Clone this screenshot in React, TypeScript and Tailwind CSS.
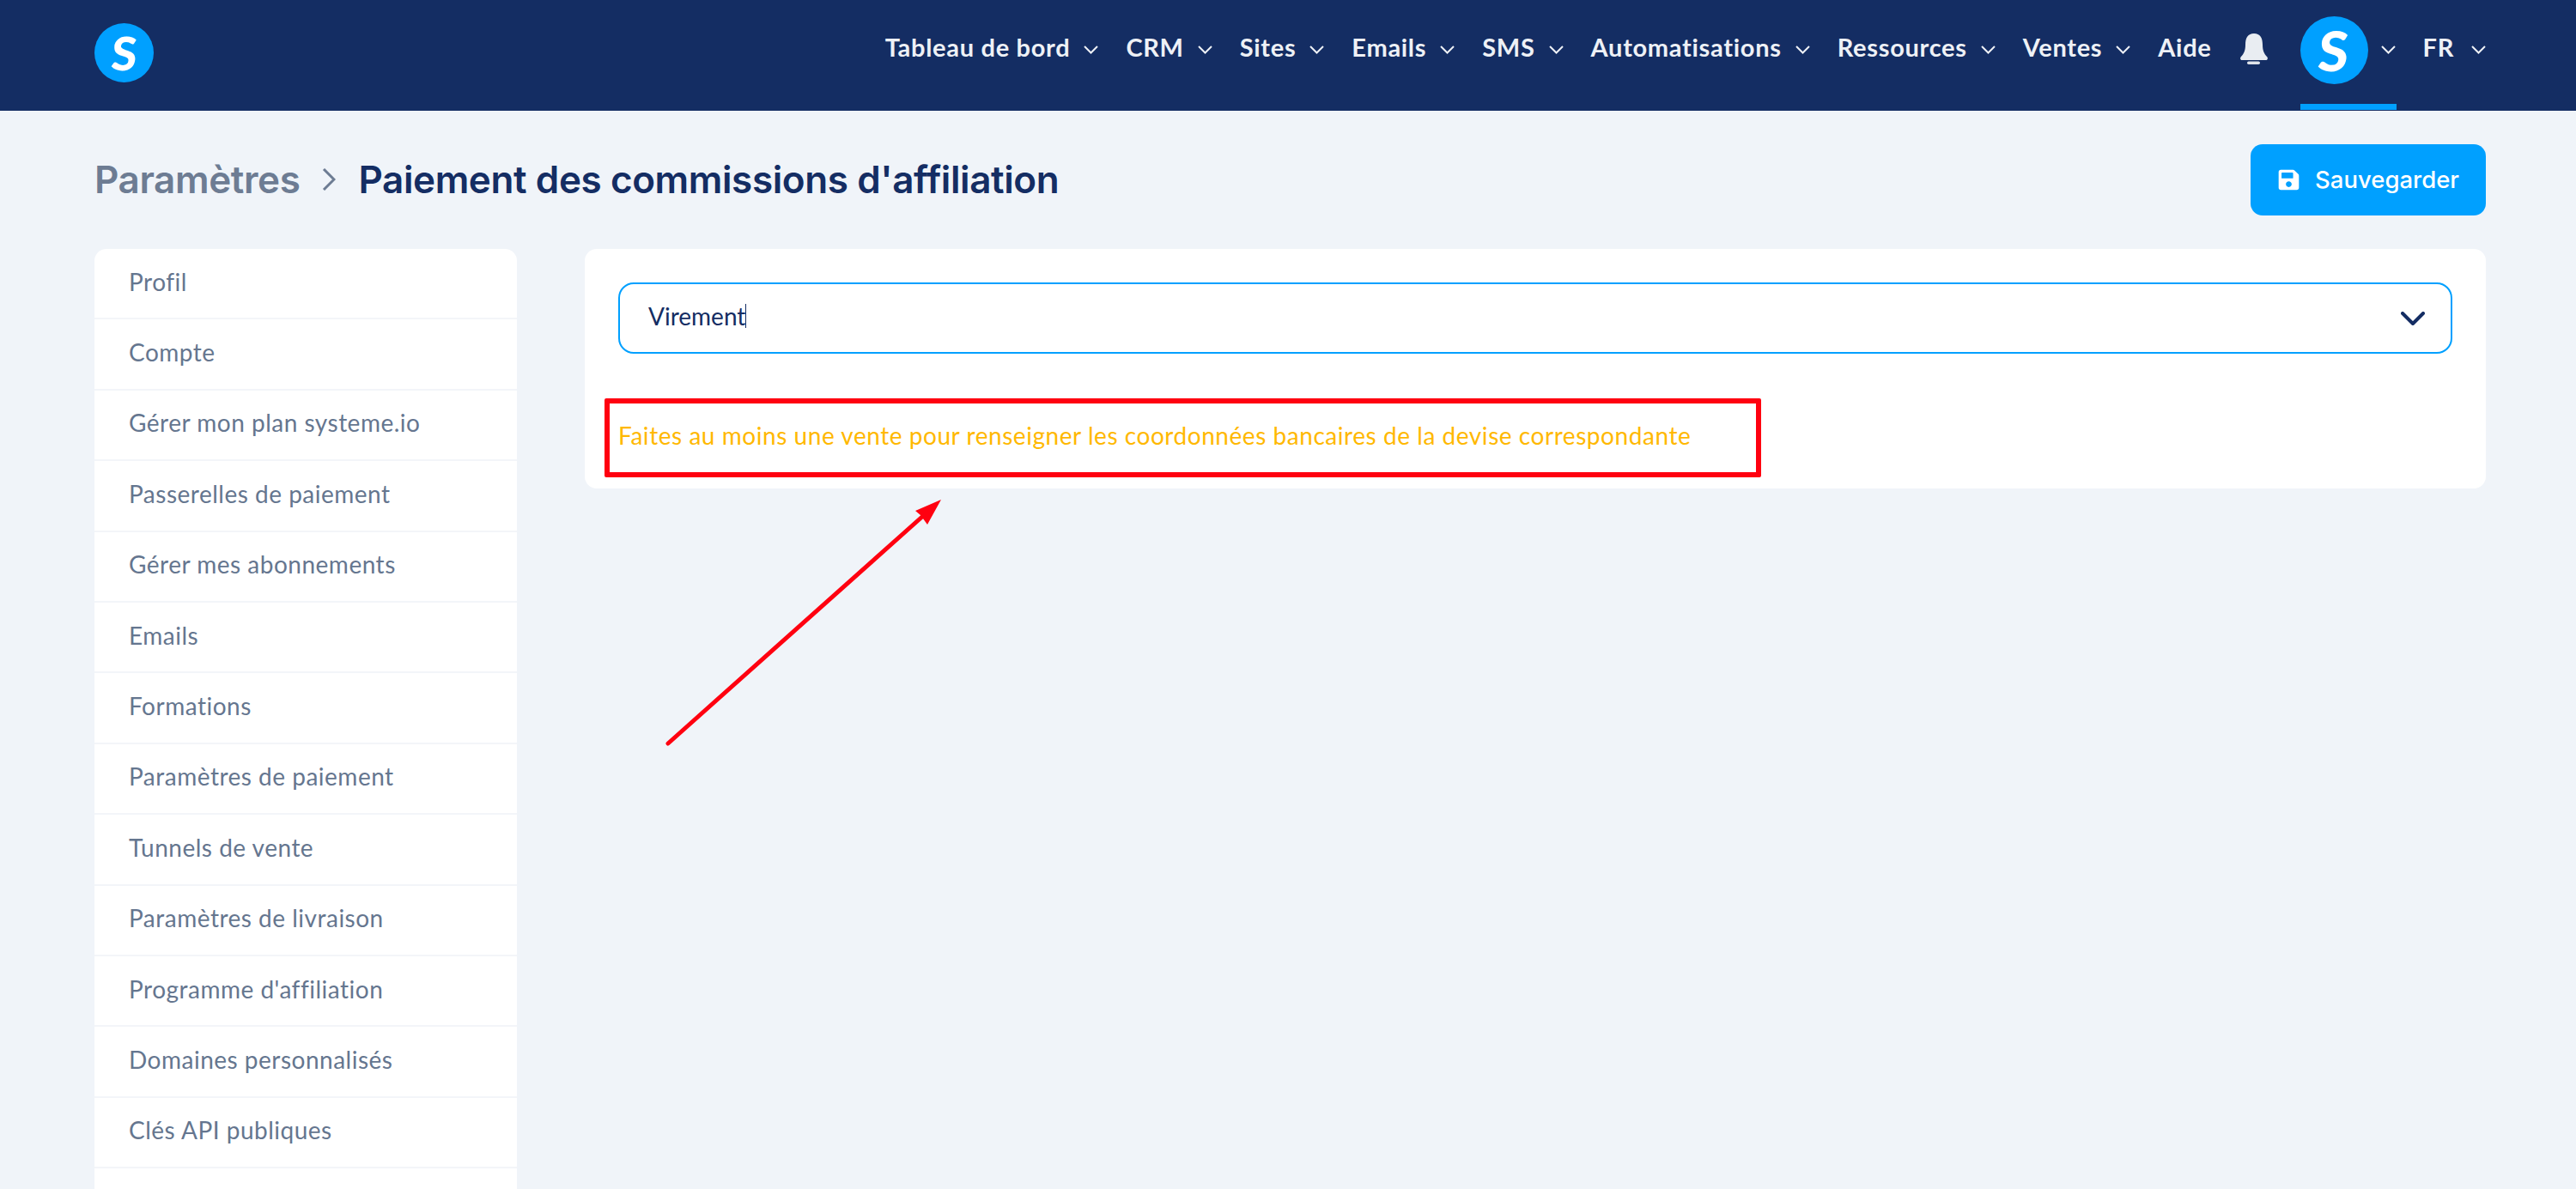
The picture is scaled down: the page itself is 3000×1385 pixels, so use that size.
import { FaSave } from "react-icons/fa";

const navItems = [
  { label: "Tableau de bord", hasMenu: true },
  { label: "CRM", hasMenu: true },
  { label: "Sites", hasMenu: true },
  { label: "Emails", hasMenu: true },
  { label: "SMS", hasMenu: true },
  { label: "Automatisations", hasMenu: true },
  { label: "Ressources", hasMenu: true },
  { label: "Ventes", hasMenu: true },
  { label: "Aide", hasMenu: false },
];

const sideItems = [
  "Profil",
  "Compte",
  "Gérer mon plan systeme.io",
  "Passerelles de paiement",
  "Gérer mes abonnements",
  "Emails",
  "Formations",
  "Paramètres de paiement",
  "Tunnels de vente",
  "Paramètres de livraison",
  "Programme d'affiliation",
  "Domaines personnalisés",
  "Clés API publiques",
];

function NavChevron() {
  return (
    <svg viewBox="0 0 17 10" className="w-[17px] h-[10px] mt-[5px] shrink-0" fill="none">
      <path d="M1 1L8.500 8.500L16 1" stroke="#eef1f6" strokeWidth="2" />
    </svg>
  );
}

function Header() {
  return (
    <header className="h-[129px] bg-[#142d63] flex justify-between items-start pl-[110px] pr-[105px]">
      <div className="pt-[27px]">
        <div className="w-[69px] h-[69px] rounded-full bg-[#00a0ff] flex items-center justify-center text-white text-[54px] font-black font-['Lato',sans-serif]">
          <span className="-skew-x-[5deg]">S</span>
        </div>
      </div>
      <nav className="flex items-center h-[108px] pt-[2px] text-[29px] font-bold text-[#eef1f6] font-['Lato',sans-serif] tracking-[0.7px]">
        <div className="flex items-center gap-[32px]">
          {navItems.map((item) => (
            <div key={item.label} className="flex items-center gap-[16px]">
              <span>{item.label}</span>
              {item.hasMenu && <NavChevron />}
            </div>
          ))}
        </div>
        <svg viewBox="0 0 34 36" className="w-[34px] h-[36px] ml-[32px] mt-[3px]" fill="#e9edf2">
          <path d="M17 0C24 0 27 5 27 13C27 20 29 24 32 27C33.500 28.500 33 31 31 31H3C1 31 .5 28.500 2 27C5 24 7 20 7 13C7 5 10 0 17 0Z" />
          <rect x="9" y="32.500" width="15" height="3.500" rx="1.700" fill="#dfe3ea" />
        </svg>
        <div className="relative flex items-center ml-[37px] gap-[15px] h-[108px]">
          <div className="w-[79px] h-[79px] mt-[7px] rounded-full bg-[#00a0ff] flex items-center justify-center text-white text-[64px] font-black">
            <span className="-skew-x-[5deg]">S</span>
          </div>
          <NavChevron />
          <div className="absolute left-0 top-[120px] w-[112px] h-[7px] bg-[#00a0ff]" />
        </div>
        <div className="flex items-center gap-[20px] ml-[32px]">
          <span>FR</span>
          <NavChevron />
        </div>
      </nav>
    </header>
  );
}

export default function App() {
  return (
    <div className="relative h-[1385px] overflow-hidden bg-[#f0f4f9] font-['Lato',sans-serif]">
      <Header />

      <div className="flex items-center justify-between pl-[110px] pr-[105px] h-[161px]">
        <div className="flex items-center pb-[2px] font-['Inter',sans-serif] text-[44px] font-semibold tracking-[-0.4px]">
          <span className="text-[#6d7c93]">Paramètres</span>
          <svg viewBox="0 0 16 26" className="w-[16px] h-[26px] mx-[26px]" fill="none">
            <path d="M2 1L14 13L2 25" stroke="#6d7c93" strokeWidth="3" />
          </svg>
          <span className="text-[#142d63]">Paiement des commissions d'affiliation</span>
        </div>
        <button className="w-[274px] h-[83px] rounded-[14px] bg-[#00a0ff] text-white flex items-center justify-center gap-[17px] text-[27.500px] font-medium font-['Inter',sans-serif]">
          <FaSave className="w-[27px] h-[27px]" />
          Sauvegarder
        </button>
      </div>

      <div className="flex items-start gap-[79px] pl-[110px] pr-[105px]">
        <aside className="w-[492px] shrink-0 bg-white rounded-t-[14px]">
          {sideItems.map((item) => (
            <div
              key={item}
              className="h-[82.4px] flex items-center pl-[40px] pb-[5px] border-b-2 border-[#f3f5f9] text-[28px] tracking-[0.5px] text-[#65768f]"
            >
              {item}
            </div>
          ))}
          <div className="h-[82px]" />
        </aside>

        <main className="flex-1 h-[279px] bg-white rounded-[14px] pt-[39px] pl-[39px] pr-[39px]">
          <div className="h-[83px] border-2 border-[#00a0ff] rounded-[18px] flex items-center justify-between pl-[33px] pr-[30px]">
            <div className="flex items-center text-[28px] text-[#142d63] pb-[6px]">
              Virement
              <div className="w-px h-[28px] bg-[#142d63]" />
            </div>
            <svg viewBox="0 0 28 16" className="w-[28px] h-[16px]" fill="none">
              <path d="M2 2L14 14L26 2" stroke="#142d63" strokeWidth="4" strokeLinecap="round" strokeLinejoin="round" />
            </svg>
          </div>
          <p className="mt-[78px] text-[28px] leading-[34px] tracking-[0.55px] text-[#ffb800]">
            Faites au moins une vente pour renseigner les coordonnées bancaires de la devise correspondante
          </p>
        </main>
      </div>

      {/* annotations posees sur la capture */}
      <div className="absolute left-[704px] top-[464px] w-[1347px] h-[92px] border-[6px] border-[#ff0010] rounded-[2px]" />
      <svg className="absolute left-0 top-0 pointer-events-none" width="3000" height="1385" fill="none">
        <path d="M778 866L1075 601" stroke="#ff0010" strokeWidth="5" strokeLinecap="round" />
        <path d="M1096 582L1066 595L1072 600L1080 611Z" fill="#ff0010" />
      </svg>
    </div>
  );
}
